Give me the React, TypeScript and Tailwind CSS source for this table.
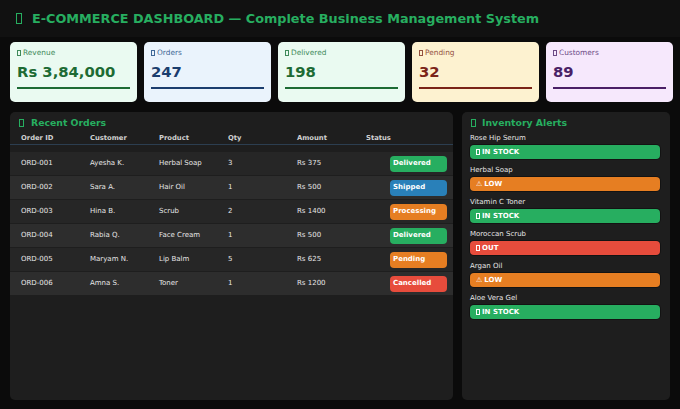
const stats = [
  { label: "Revenue", value: "Rs 3,84,000", bg: "bg-[#eafaf1]", fg: "text-[#1d6b34]", lbl: "text-[#3f8a5a]", bar: "bg-[#1d6b34]" },
  { label: "Orders", value: "247", bg: "bg-[#eaf3fc]", fg: "text-[#1b3d6e]", lbl: "text-[#3f6796]", bar: "bg-[#1b3d6e]" },
  { label: "Delivered", value: "198", bg: "bg-[#eafaf1]", fg: "text-[#1d6b34]", lbl: "text-[#3f8a5a]", bar: "bg-[#1d6b34]" },
  { label: "Pending", value: "32", bg: "bg-[#fdf2d0]", fg: "text-[#7b2418]", lbl: "text-[#94513f]", bar: "bg-[#7b2418]" },
  { label: "Customers", value: "89", bg: "bg-[#f6e8fc]", fg: "text-[#4a1f66]", lbl: "text-[#6c4a85]", bar: "bg-[#4a1f66]" },
]

const orders = [
  { id: "ORD-001", customer: "Ayesha K.", product: "Herbal Soap", qty: 3, amount: "Rs 375", status: "Delivered" },
  { id: "ORD-002", customer: "Sara A.", product: "Hair Oil", qty: 1, amount: "Rs 500", status: "Shipped" },
  { id: "ORD-003", customer: "Hina B.", product: "Scrub", qty: 2, amount: "Rs 1400", status: "Processing" },
  { id: "ORD-004", customer: "Rabia Q.", product: "Face Cream", qty: 1, amount: "Rs 500", status: "Delivered" },
  { id: "ORD-005", customer: "Maryam N.", product: "Lip Balm", qty: 5, amount: "Rs 625", status: "Pending" },
  { id: "ORD-006", customer: "Amna S.", product: "Toner", qty: 1, amount: "Rs 1200", status: "Cancelled" },
]

const statusColor: Record<string, string> = {
  Delivered: "bg-[#27ae60]",
  Shipped: "bg-[#2980b9]",
  Processing: "bg-[#e67e22]",
  Pending: "bg-[#e67e22]",
  Cancelled: "bg-[#e74c3c]",
}

const inventory = [
  { name: "Rose Hip Serum", level: "ok" },
  { name: "Herbal Soap", level: "low" },
  { name: "Vitamin C Toner", level: "ok" },
  { name: "Moroccan Scrub", level: "out" },
  { name: "Argan Oil", level: "low" },
  { name: "Aloe Vera Gel", level: "ok" },
]

const levelStyle: Record<string, { bg: string; text: string; warn: boolean }> = {
  ok: { bg: "bg-[#27ae60]", text: "IN STOCK", warn: false },
  low: { bg: "bg-[#e67e22]", text: "LOW", warn: true },
  out: { bg: "bg-[#e74c3c]", text: "OUT", warn: false },
}

// missing-glyph box, the way the emoji shows up in the original
function Tofu({ className }: { className: string }) {
  return <span className={`inline-block shrink-0 border border-current ${className}`} />
}

export default function App() {
  return (
    <div className="h-[409px] w-[680px] overflow-hidden bg-[#0b0b0b] font-['DejaVu_Sans',sans-serif]">
      <header className="flex h-[37px] items-center bg-[#111111] pl-[16px] text-[#27ae60]">
        <Tofu className="mr-[10px] h-[11px] w-[6px]" />
        <h1 className="text-[12.8px] font-bold">
          E-COMMERCE DASHBOARD — Complete Business Management System
        </h1>
      </header>

      <div className="flex gap-[7px] pl-[10px] pr-[7px] pt-[5px]">
        {stats.map((s) => (
          <div key={s.label} className={`flex-1 rounded-[5px] px-[7px] pb-[13px] pt-[6px] ${s.bg}`}>
            <div className={`flex items-center gap-[2px] text-[7.4px] leading-[10px] ${s.lbl}`}>
              <Tofu className="h-[6px] w-[4px]" />
              <span>{s.label}</span>
            </div>
            <div className={`mt-[5px] text-[14.8px] font-bold leading-[18px] ${s.fg}`}>{s.value}</div>
            <div className={`mt-[6px] h-[2px] ${s.bar}`} />
          </div>
        ))}
      </div>

      <div className="flex gap-[9px] px-[10px] pt-[10px]">
        <section className="h-[288px] w-[443px] rounded-[5px] bg-[#1e1e1e] pt-[5px]">
          <h2 className="flex items-center gap-[7px] pl-[9px] text-[9.3px] font-bold leading-[12px] text-[#27ae60]">
            <Tofu className="h-[8px] w-[5px]" />
            <span>Recent Orders</span>
          </h2>
          <div className="mt-[3px] grid h-[13px] grid-cols-[69px_69px_69px_69px_69px_1fr] items-center border-b-[1.5px] border-[#2c3e50] pl-[11px] text-[6.8px] font-bold text-[#d0d0d0]">
            <span>Order ID</span>
            <span>Customer</span>
            <span>Product</span>
            <span>Qty</span>
            <span>Amount</span>
            <span>Status</span>
          </div>
          <div className="mt-[7px]">
            {orders.map((o, i) => (
              <div
                key={o.id}
                className={`grid h-[24px] grid-cols-[69px_69px_69px_69px_69px_1fr] items-center border-b border-[#1e1e1e] pl-[11px] text-[7px] text-[#e6e6e6] ${i % 2 === 0 ? "bg-[#262626]" : "bg-[#2d2d2d]"}`}
              >
                <span>{o.id}</span>
                <span>{o.customer}</span>
                <span>{o.product}</span>
                <span>{o.qty}</span>
                <span>{o.amount}</span>
                <span className="flex justify-end pr-[6px]">
                  <span className={`block h-[16px] w-[57px] rounded-[4px] pl-[3px] pt-[1px] text-[7px] font-bold leading-[12px] text-white ${statusColor[o.status]}`}>
                    {o.status}
                  </span>
                </span>
              </div>
            ))}
          </div>
        </section>

        <section className="h-[288px] flex-1 rounded-[5px] bg-[#1e1e1e] pl-[8px] pr-[10px] pt-[5px]">
          <h2 className="flex items-center gap-[6px] pl-[1px] text-[9.3px] font-bold leading-[12px] text-[#27ae60]">
            <Tofu className="h-[8px] w-[5px]" />
            <span>Inventory Alerts</span>
          </h2>
          <div className="mt-[4px] flex flex-col gap-[6px]">
            {inventory.map((item) => (
              <div key={item.name}>
                <div className="text-[7px] leading-[10px] text-[#e6e6e6]">{item.name}</div>
                <div
                  className={`mt-[2px] flex h-[14px] items-center gap-[2px] rounded-[4px] pl-[6px] text-[7px] font-bold text-white shadow-[0_0_0_1px_rgba(0,0,0,0.35)] ${levelStyle[item.level].bg}`}
                >
                  {levelStyle[item.level].warn ? (
                    <span className="font-normal">⚠</span>
                  ) : (
                    <Tofu className="h-[6px] w-[4px]" />
                  )}
                  <span>{levelStyle[item.level].text}</span>
                </div>
              </div>
            ))}
          </div>
        </section>
      </div>
    </div>
  )
}
